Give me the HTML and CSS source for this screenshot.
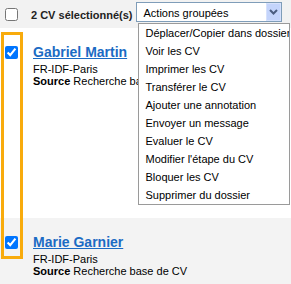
FILE: index.html
```html
<!DOCTYPE html>
<html lang="fr">
<head>
<meta charset="utf-8">
<title>CV</title>
<link rel="stylesheet" href="styles.css">
</head>
<body>
<div class="toolbar">
  <input type="checkbox" class="cb">
  <span class="count">2 CV sélectionné(s)</span>
  <div class="select-wrap">
    <div class="select">
      <span class="select-label">Actions groupées</span>
      <span class="select-btn"><svg width="9" height="6" viewBox="0 0 9 6"><path d="M1 1 L4.5 4.5 L8 1" fill="none" stroke="#4b5d80" stroke-width="2"/></svg></span>
    </div>
    <ul class="menu">
      <li>Déplacer/Copier dans dossier</li>
      <li>Voir les CV</li>
      <li>Imprimer les CV</li>
      <li>Transférer le CV</li>
      <li>Ajouter une annotation</li>
      <li>Envoyer un message</li>
      <li>Evaluer le CV</li>
      <li>Modifier l'étape du CV</li>
      <li>Bloquer les CV</li>
      <li>Supprimer du dossier</li>
    </ul>
  </div>
</div>
<div class="list">
  <div class="highlight"></div>
  <div class="row first">
    <div class="check"><input type="checkbox" class="cb" checked></div>
    <div class="info">
      <a class="name" href="#">Gabriel Martin</a>
      <div class="line">FR-IDF-Paris</div>
      <div class="line"><b>Source</b> Recherche base de CV</div>
    </div>
  </div>
  <div class="row alt">
    <div class="check"><input type="checkbox" class="cb" checked></div>
    <div class="info">
      <a class="name" href="#">Marie Garnier</a>
      <div class="line">FR-IDF-Paris</div>
      <div class="line"><b>Source</b> Recherche base de CV</div>
    </div>
  </div>
</div>
</body>
</html>
```
FILE: styles.css
```css
html, body {
  margin: 0;
  padding: 0;
  background: #ffffff;
  font-family: "Liberation Sans", Arial, sans-serif;
  font-size: 11px;
  color: #000;
  overflow: hidden;
}
.toolbar {
  height: 28px;
  background: #f2f2f2;
  display: flex;
  align-items: center;
  padding-left: 1px;
  position: relative;
  z-index: 2;
}
.cb {
  width: 13px;
  height: 13px;
  margin: 3px 3px 3px 4px;
  flex: none;
}
.count {
  font-weight: bold;
  color: #222;
  margin-left: 10px;
  line-height: 12px;
  margin-top: 1px;
}
.select-wrap {
  position: relative;
  align-self: flex-start;
  margin-top: 2px;
  margin-left: 4px;
}
.select {
  width: 146px;
  height: 20px;
  box-sizing: border-box;
  border: 1px solid #7f9db9;
  background: #fff;
  display: flex;
  align-items: stretch;
}
.select-label {
  flex: 1;
  padding-left: 6px;
  line-height: 18px;
  padding-top: 1px;
}
.select-btn {
  width: 15px;
  box-sizing: border-box;
  margin: 0;
  background: #c4d4fb;
  border: 1px solid #d6e1fc;
  display: flex;
  align-items: center;
  justify-content: center;
}
.menu {
  position: absolute;
  top: 21px;
  left: 2px;
  width: 152px;
  box-sizing: border-box;
  margin: 0;
  padding: 0;
  list-style: none;
  background: #fff;
  border: 1px solid #9a9a9a;
  overflow: hidden;
  white-space: nowrap;
}
.menu li {
  height: 18px;
  line-height: 18px;
  padding-left: 6px;
}
.list {
  position: relative;
}
.highlight {
  position: absolute;
  left: 1px;
  top: 4px;
  width: 22px;
  height: 227px;
  box-sizing: border-box;
  border: 3px solid #f8ab0c;
  pointer-events: none;
}
.row {
  display: flex;
  padding-top: 16px;
  box-sizing: border-box;
}
.row.first {
  height: 190px;
}
.row.alt {
  background: #f3f3f3;
  height: 80px;
}
.check {
  width: 32px;
  padding-left: 1px;
  box-sizing: border-box;
  flex: none;
}
.check .cb {
  margin-top: 2px;
}
.info {
  display: flex;
  flex-direction: column;
  padding-left: 1px;
}
.name {
  font-size: 14px;
  font-weight: bold;
  line-height: 16px;
  color: #1b6bc4;
  text-decoration: underline;
  margin-bottom: 3px;
}
.line {
  line-height: 12px;
  white-space: nowrap;
}
```
